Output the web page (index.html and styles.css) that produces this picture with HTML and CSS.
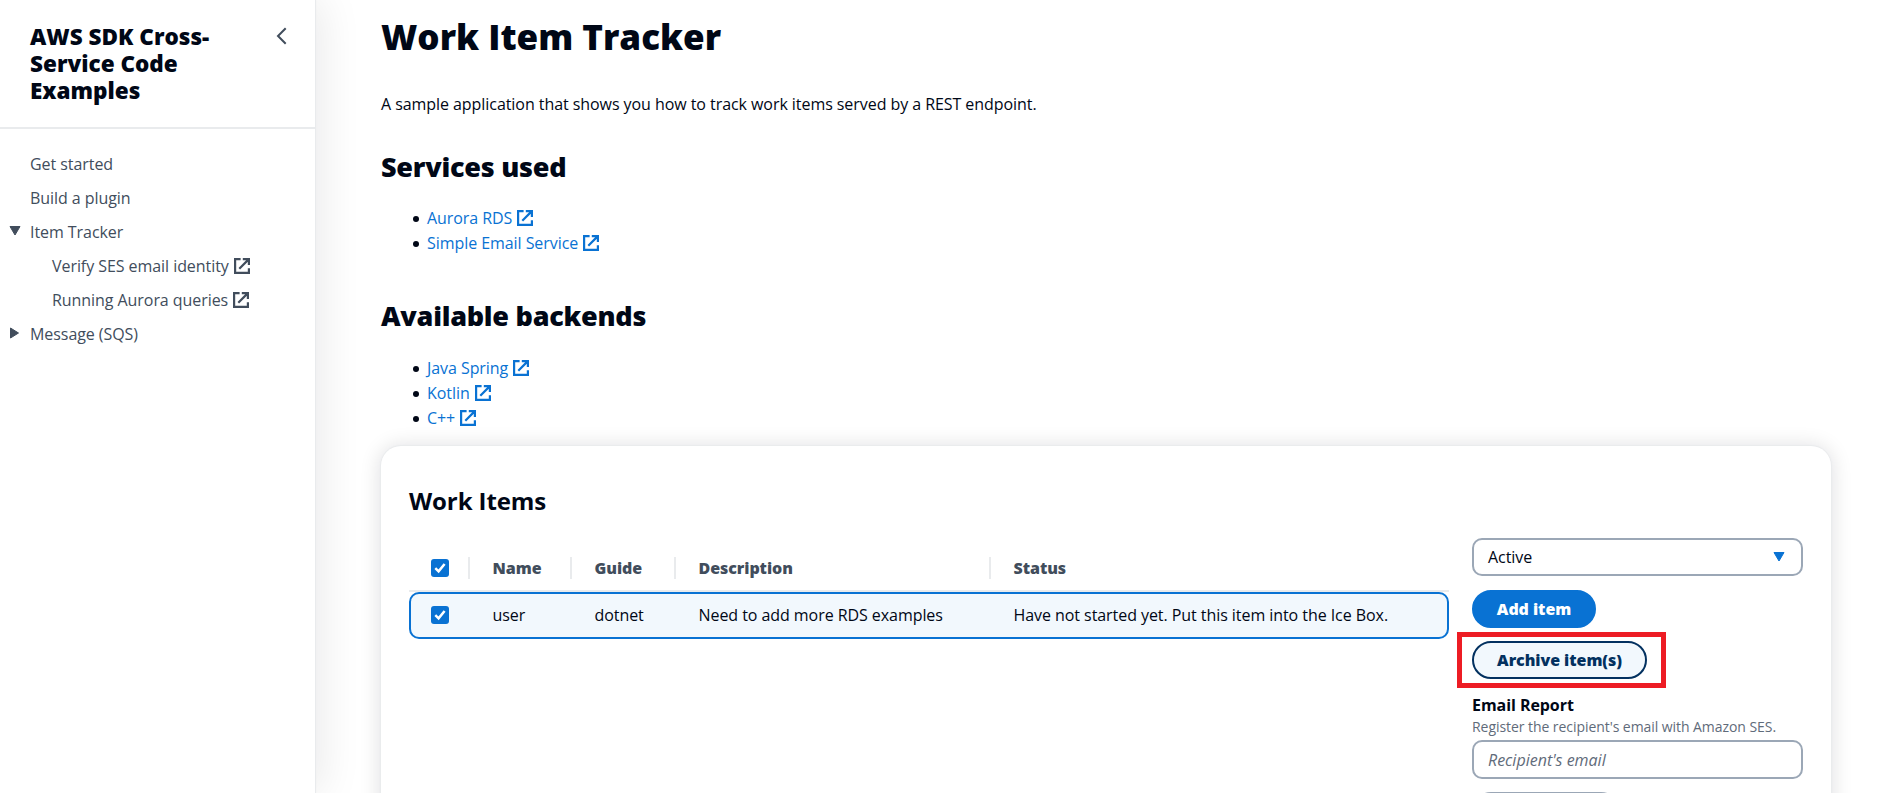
FILE: index.html
```html
<!DOCTYPE html>
<html lang="en">
<head>
<meta charset="utf-8">
<title>Work Item Tracker</title>
<link rel="stylesheet" href="styles.css">
</head>
<body>
<svg class="defs" width="0" height="0">
  <symbol id="ext" viewBox="0 0 16 16"><path d="M6.600 1.100H1.100v13.800h13.800V10.300M8.800 1.100h6.100v6M14.600 1.400 5.300 10.700" fill="none" stroke="currentColor" stroke-width="2.200"/></symbol>
  <symbol id="check" viewBox="0 0 18 18"><path d="M4.3 9.2 7.6 12.4 13.6 5" fill="none" stroke="#fff" stroke-width="2.5"/></symbol>
</svg>
<div class="app">
  <aside class="sidebar">
    <header class="side-head">
      <h2 class="side-title">AWS SDK Cross-Service Code Examples</h2>
      <svg class="collapse" viewBox="0 0 11 18"><path d="M9.700 1.200 2 9l7.700 7.800" fill="none" stroke="currentColor" stroke-width="2"/></svg>
    </header>
    <nav class="nav">
      <a class="item">Get started</a>
      <a class="item">Build a plugin</a>
      <a class="item"><svg class="caret" viewBox="0 0 12 12"><path d="M1 1.5h10L6 10z" fill="currentColor" stroke="currentColor" stroke-linejoin="round"/></svg>Item Tracker</a>
      <a class="item nested">Verify SES email identity<svg class="ext"><use href="#ext"/></svg></a>
      <a class="item nested">Running Aurora queries<svg class="ext"><use href="#ext"/></svg></a>
      <a class="item"><svg class="caret" viewBox="0 0 12 12"><path d="M1.5 1v10L9.500 6z" fill="currentColor" stroke="currentColor" stroke-linejoin="round"/></svg>Message (SQS)</a>
    </nav>
  </aside>
  <main class="main">
    <h1 class="title">Work Item Tracker</h1>
    <p class="intro">A sample application that shows you how to track work items served by a REST endpoint.</p>
    <h2 class="heading">Services used</h2>
    <ul class="links">
      <li><a>Aurora RDS<svg class="ext"><use href="#ext"/></svg></a></li>
      <li><a>Simple Email Service<svg class="ext"><use href="#ext"/></svg></a></li>
    </ul>
    <h2 class="heading">Available backends</h2>
    <ul class="links">
      <li><a>Java Spring<svg class="ext"><use href="#ext"/></svg></a></li>
      <li><a>Kotlin<svg class="ext"><use href="#ext"/></svg></a></li>
      <li><a>C++<svg class="ext"><use href="#ext"/></svg></a></li>
    </ul>
    <section class="card">
      <h3 class="card-title">Work Items</h3>
      <div class="card-body">
        <div class="table">
          <div class="row head">
            <span class="cell"><svg class="box"><use href="#check"/></svg></span>
            <span class="cell">Name</span>
            <span class="cell">Guide</span>
            <span class="cell">Description</span>
            <span class="cell">Status</span>
          </div>
          <div class="row selected">
            <span class="cell"><svg class="box"><use href="#check"/></svg></span>
            <span class="cell">user</span>
            <span class="cell">dotnet</span>
            <span class="cell">Need to add more RDS examples</span>
            <span class="cell">Have not started yet. Put this item into the Ice Box.</span>
          </div>
        </div>
        <div class="panel">
          <div class="select">Active<svg class="arrow" viewBox="0 0 12 12"><path d="M1 1.500h10L6 10z" fill="currentColor" stroke="currentColor" stroke-linejoin="round"/></svg></div>
          <button class="btn primary">Add item</button>
          <div class="archive"><button class="btn outline">Archive item(s)</button><i class="marker"></i></div>
          <label class="label">Email Report</label>
          <p class="hint">Register the recipient's email with Amazon SES.</p>
          <input class="input" placeholder="Recipient's email">
          <div class="btn disabled"></div>
        </div>
      </div>
    </section>
  </main>
</div>
</body>
</html>
```
FILE: styles.css
```css
* { box-sizing: border-box; }
html, body { height: 100%; }
body {
  margin: 0;
  overflow: hidden;
  background: #fff;
  color: #000716;
  font: 16px/25px "Open Sans", "Noto Sans", sans-serif;
  letter-spacing: -0.06px;
}
h1, h2, h3, p, ul { margin: 0; padding: 0; }
.defs { position: absolute; }
.app { display: flex; height: 793px; overflow: hidden; }

.sidebar {
  flex: none;
  width: 315px;
  color: #414d5c;
  box-shadow: 1px 0 1px #e9ebed, 6px 0 40px rgba(0, 7, 22, 0.09);
}
.side-head {
  display: flex;
  justify-content: space-between;
  height: 129px;
  padding: 23px 28px 0 30px;
  border-bottom: 2px solid #e9ebed;
}
.side-title { width: 200px; font-size: 22.5px; line-height: 27px; font-weight: 800; letter-spacing: 0; color: #000716; }
.collapse { width: 11px; height: 18px; margin-top: 4px; }
.nav { display: flex; flex-direction: column; padding-top: 18px; }
.item { display: flex; align-items: center; height: 34px; padding-left: 30px; white-space: nowrap; }
.nested { padding-left: 52px; }
.caret { width: 12px; height: 12px; margin: -2px 9px 0 -21px; }
.ext { flex: none; width: 16px; height: 16px; margin-left: 5px; }

.main { flex: none; width: 1450px; margin-left: 66px; }
.title { padding-top: 14px; font-size: 35px; line-height: 45px; font-weight: 800; letter-spacing: 0; }
.intro { margin-top: 33px; }
.heading { margin-top: 32px; font-size: 27px; line-height: 35px; font-weight: 800; letter-spacing: -0.25px; }
.links { margin: 22px 0 0; padding-left: 32px; list-style: none; }
.links + .heading { margin-top: 42px; }
.links + .heading + .links { margin-top: 23px; }
.links li { display: flex; height: 25px; }
.links li::before { content: ""; width: 6px; height: 6px; margin: 10px 8px 0 0; border-radius: 50%; background: #000716; }
.links a { display: inline-flex; align-items: center; height: 24px; color: #0972d3; }

.card {
  height: 400px;
  margin-top: 15px;
  padding: 39px 28px 0;
  border-radius: 20px;
  background: #fff;
  box-shadow: 0 0 1px 1px #e9ebed, 0 1px 20px 2px rgba(0, 7, 22, 0.12);
}
.card-title { font-size: 24px; line-height: 32px; font-weight: 700; letter-spacing: -0.1px; }
.card-body { display: flex; justify-content: space-between; margin-top: 21px; }
.table { width: 1040px; padding-top: 8px; }
.row { display: grid; grid-template-columns: 59px 102px 104px 315px 1fr; align-items: center; }
.cell { padding-left: 22.5px; white-space: nowrap; line-height: 22px; }
.cell:first-child { padding-left: 22px; }
.head { height: 46px; border-bottom: 2px solid #e9ebed; color: #414d5c; font-weight: 800; }
.head .cell:not(:first-child) { border-left: 2px solid #e9ebed; }
.selected { height: 47px; padding-bottom: 1px; border: 2px solid #0972d3; border-radius: 10px; background: #f2f8fd; }
.selected .cell:first-child { padding-left: 20px; }
.box { display: block; width: 18px; height: 18px; border-radius: 3px; background: #0972d3; }

.panel { display: flex; flex-direction: column; align-items: flex-start; width: 331px; }
.select, .input { width: 331px; height: 38px; border: 2px solid #9ba7b6; border-radius: 10px; padding: 0 16px 0 14px; background: #fff; }
.select { display: flex; align-items: center; justify-content: space-between; }
.arrow { width: 12px; height: 12px; color: #0972d3; }
.btn { height: 38px; border: 2px solid; border-radius: 25px; padding: 0; font: inherit; font-weight: 800; line-height: 25px; letter-spacing: -0.06px; white-space: nowrap; }
.primary { width: 124px; margin: 14px 0 13px; border-color: #0972d3; background: #0972d3; color: #fff; }
.archive { position: relative; height: 38px; }
.outline { width: 175px; border-color: #033160; background: #f2f8fd; color: #033160; }
.marker { position: absolute; left: -15px; top: -9px; width: 209px; height: 56px; border: 5px solid #ed1c24; }
.label { margin-top: 14px; line-height: 24px; font-weight: 700; }
.hint { font-size: 14px; line-height: 20px; color: #5f6b7a; white-space: nowrap; }
.input { height: 39px; margin-top: 3px; font: italic 16px/25px "Open Sans", sans-serif; }
.input::placeholder { color: #5f6b7a; opacity: 1; }
.disabled { width: 148px; margin-top: 13px; border-color: #9ba7b6; }
```
